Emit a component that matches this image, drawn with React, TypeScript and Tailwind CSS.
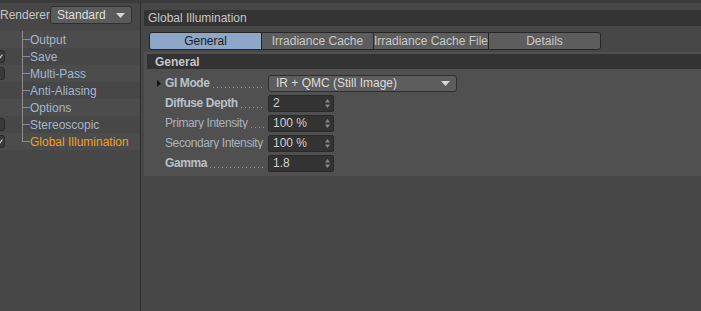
import React from 'react'

const FONT = { fontFamily: '"Liberation Sans", Arial, sans-serif' }

const TREE = [
  { label: 'Output', check: null as null | boolean },
  { label: 'Save', check: true },
  { label: 'Multi-Pass', check: false },
  { label: 'Anti-Aliasing', check: null },
  { label: 'Options', check: null },
  { label: 'Stereoscopic', check: false },
  { label: 'Global Illumination', check: true, active: true },
]

const TABS = ['General', 'Irradiance Cache', 'Irradiance Cache File', 'Details']

const FIELDS = [
  { label: 'Diffuse Depth', value: '2', bold: true },
  { label: 'Primary Intensity', value: '100 %', bold: false },
  { label: 'Secondary Intensity', value: '100 %', bold: false },
  { label: 'Gamma', value: '1.8', bold: true },
]

const DOTS = Array.from({ length: 26 }, (_, i) => i)

function Spinner() {
  return (
    <svg width="5" height="9" viewBox="0 0 5 9" className="shrink-0">
      <path d="M2.5 0 L5 3.5 H0 Z" fill="#8a8a8a" />
      <path d="M2.5 9 L5 5.5 H0 Z" fill="#8a8a8a" />
    </svg>
  )
}

function DownArrow() {
  return (
    <svg width="9" height="5" viewBox="0 0 9 5" className="shrink-0">
      <path d="M0 0 H9 L4.5 5 Z" fill="#d8d8d8" />
    </svg>
  )
}

function Leader({ bold, label }: { bold: boolean; label: string }) {
  return (
    <div className="flex w-[100px] shrink-0 items-center overflow-hidden whitespace-nowrap">
      <span className={`shrink-0 tracking-[-0.4px] ${bold ? 'font-bold text-[#b9c0c8]' : 'text-[#a9b1bb]'}`}>{label}</span>
      <div className="ml-[3px] mt-[8px] flex h-px flex-1 gap-[3px] overflow-hidden">
        {DOTS.map(d => (
          <span key={d} className="h-px w-px shrink-0 bg-[#8d949c]" />
        ))}
      </div>
    </div>
  )
}

export default function App() {
  return (
    <div className="flex h-[311px] w-[701px] overflow-hidden bg-[#474747] text-[12px] leading-none" style={FONT}>
      {/* ── sidebar ── */}
      <div className="flex w-[141px] shrink-0 flex-col border-r border-[#2d2d2d] border-t-[3px] border-t-[#3b3b3b]">
        <div className="flex h-[28px] items-center pb-[4px]">
          <span className="w-[50px] shrink-0 text-[#c4c4c4]">Renderer</span>
          <div className="flex h-[18px] w-[82px] items-center justify-between rounded-[3px] border border-[#2f2f2f] bg-[#5b5b5b] pl-[6px] pr-[6px]">
            <span className="text-[#dedede]">Standard</span>
            <DownArrow />
          </div>
        </div>
        <div className="flex flex-col">
          {TREE.map((t, i) => (
            <div key={t.label} className={`relative flex h-[17px] items-center ${i % 2 === 0 ? 'bg-[#4c4c4c]' : ''}`}>
              <div className="relative h-full w-[30px] shrink-0">
                {t.check !== null && (
                  <div className="absolute left-[-7px] top-[2px] flex h-[13px] w-[12px] items-center justify-end rounded-[3px] border border-[#2a2a2a] bg-[#3a3a3a] pr-[1px]">
                    {t.check && (
                      <svg width="6" height="6" viewBox="0 0 6 6">
                        <path d="M0.5 3.5 L2 5 L5.5 0.5" stroke="#d0d0d0" strokeWidth="1.2" fill="none" />
                      </svg>
                    )}
                  </div>
                )}
                <div className={`absolute left-[22px] top-0 w-px bg-[#8c8c8c] ${i === TREE.length - 1 ? 'h-[9px]' : 'h-full'}`} />
                <div className="absolute left-[22px] top-[8px] h-px w-[8px] bg-[#8c8c8c]" />
              </div>
              <span className={t.active ? 'text-[#f0a020]' : 'text-[#a6b6cc]'}>{t.label}</span>
            </div>
          ))}
        </div>
      </div>

      {/* ── main ── */}
      <div className="flex flex-1 flex-col border-t-[3px] border-t-[#3b3b3b] pl-[3px]">
        <div className="mt-[7px] flex h-[16px] items-center bg-[#343434] pl-[4px]">
          <span className="text-[#c9c9c9]">Global Illumination</span>
        </div>
        <div className="ml-[5px] mt-[6px] flex h-[18px] w-[452px] overflow-hidden rounded-[3px] border border-[#262626]">
          {TABS.map((t, i) => (
            <div
              key={t}
              className={`flex flex-1 items-center justify-center whitespace-nowrap ${i > 0 ? 'border-l border-[#262626]' : ''} ${i === 0 ? 'bg-[#8ea6c8] text-[#1c1c1c]' : 'bg-[#5d5d5d] text-[#c8c8c8]'}`}
            >
              {t}
            </div>
          ))}
        </div>
        <div className="mt-[2px] flex h-[124px] flex-col bg-[#505050] pt-[2px]">
          <div className="ml-[3px] flex h-[15px] items-center bg-[#333333] pl-[8px]">
            <span className="font-bold text-[#c6c6c6]">General</span>
          </div>
          <div className="flex flex-col pl-[13px] pt-[4px]">
            <div className="flex h-[20px] items-center">
              <svg width="4" height="7" viewBox="0 0 4 7" className="mr-[4px] shrink-0">
                <path d="M0 0 L4 3.5 L0 7 Z" fill="#141414" />
              </svg>
              <Leader bold label="GI Mode" />
              <div className="ml-[3px] flex h-[17px] w-[189px] items-center justify-between rounded-[3px] border border-[#2f2f2f] bg-[#5d5d5d] pl-[7px] pr-[6px]">
                <span className="text-[#dcdcdc]">IR + QMC (Still Image)</span>
                <DownArrow />
              </div>
            </div>
            {FIELDS.map(f => (
              <div key={f.label} className="flex h-[20px] items-center pl-[8px]">
                <Leader bold={f.bold} label={f.label} />
                <div className="ml-[3px] flex h-[17px] w-[66px] items-center justify-between rounded-[2px] border border-[#2a2a2a] bg-[#333333] pl-[4px] pr-[3px]">
                  <span className="text-[#cfcfcf]">{f.value}</span>
                  <Spinner />
                </div>
              </div>
            ))}
          </div>
        </div>
      </div>
    </div>
  )
}
